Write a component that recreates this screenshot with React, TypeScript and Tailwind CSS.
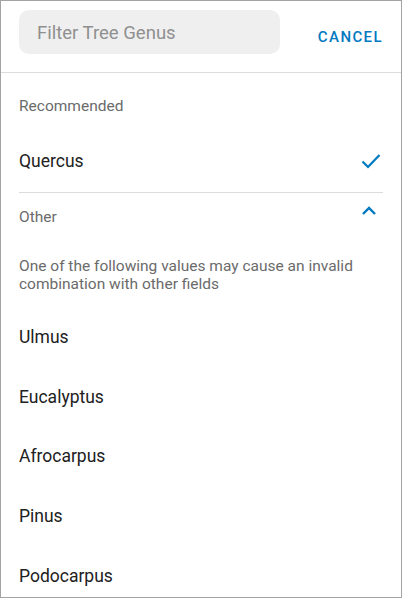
const others = ['Ulmus', 'Eucalyptus', 'Afrocarpus', 'Pinus', 'Podocarpus']

const App = () => {
	return (
		<div
			className="h-[598px] w-[402px] overflow-hidden border border-[#a3a3a3] bg-white"
			style={{ fontFamily: 'Roboto, "Noto Sans", sans-serif' }}
		>
			<div className="flex h-[72px] items-start border-b border-[#dcdcdc] pl-[18px] pr-[18px] pt-[9px]">
				<div className="flex h-[44px] w-[261px] items-center rounded-[10px] bg-[#efefef] pl-[18px] pt-[3px] text-[18.5px] text-[#8f8f8f]">
					Filter Tree Genus
				</div>
				<div className="ml-auto mt-[16px] text-[15px] font-medium tracking-[1.4px] text-[#0079c1]">
					CANCEL
				</div>
			</div>

			<div className="px-[18px] pt-[23px] text-[15.5px] leading-[20px] text-[#6b6b6b]">
				Recommended
			</div>

			<div className="mt-[33px] flex h-[24px] items-center justify-between px-[18px]">
				<span className="text-[17.5px] leading-[24px] text-[#212121]">Quercus</span>
				<svg width="20" height="16" viewBox="0 0 20 16" className="mr-[2px] -mt-[1px]" fill="none">
					<path d="M1.5 8.5 L7 14 L18.5 2" stroke="#0079c1" strokeWidth="2.2" />
				</svg>
			</div>
			<div className="mx-[18px] mt-[19px] h-px bg-[#dcdcdc]" />

			<div className="flex items-start justify-between px-[18px] pt-[14px]">
				<span className="text-[15.5px] leading-[20px] text-[#6b6b6b]">Other</span>
				<svg width="16" height="10" viewBox="0 0 16 10" className="mr-[6px] -mt-[1px]" fill="none">
					<path d="M2 8 L8 2 L14 8" stroke="#0079c1" strokeWidth="2.4" />
				</svg>
			</div>

			<div className="mt-[30px] px-[18px] text-[15.5px] leading-[18px] text-[#6b6b6b]">
				One of the following values may cause an invalid combination with other fields
			</div>

			<div className="mt-[14px] flex flex-col">
				{others.map((name) => (
					<div
						key={name}
						className="flex h-[59.75px] shrink-0 items-center px-[18px] text-[17.5px] text-[#212121]"
					>
						{name}
					</div>
				))}
			</div>
		</div>
	)
}

export default App
